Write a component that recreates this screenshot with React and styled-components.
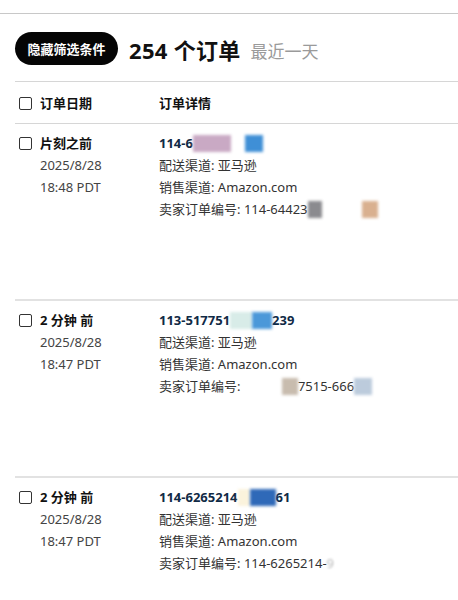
import React from 'react'
import styled, { createGlobalStyle } from 'styled-components'

const GlobalStyle = createGlobalStyle`
  body {
    margin: 0;
    background: #fff;
    font-family: 'Noto Sans', 'Noto Sans CJK SC', sans-serif;
    color: #111;
  }
`

const orders = [
  {
    when: '片刻之前',
    date: '2025/8/28',
    time: '18:48 PDT',
    id: ['114-6', '4423', ''],
    idMask: [{ w: 38, c: '#c9a9c4' }, { gap: 14, w: 18, c: '#3f8fd6' }],
    sellerId: '114-64423',
    sellerMask: [{ w: 14, c: '#8b8b8f' }, { gap: 40, w: 16, c: '#d9b08f' }],
  },
  {
    when: '2 分钟 前',
    date: '2025/8/28',
    time: '18:47 PDT',
    id: ['113-517751', '', '239'],
    idMask: [{ w: 22, c: '#d8ece8' }, { w: 20, c: '#4b98d9' }],
    sellerId: '',
    sellerPre: 38,
    sellerMask: [{ w: 16, c: '#c8bcae' }],
    sellerTail: '7515-666',
    tailMask: { w: 18, c: '#bccbdc' },
  },
  {
    when: '2 分钟 前',
    date: '2025/8/28',
    time: '18:47 PDT',
    id: ['114-6265214', '', '61'],
    idMask: [{ w: 12, c: '#fbf3dc' }, { w: 26, c: '#2f69b8' }],
    sellerId: '114-6265214-',
  },
]

const App = () => {
  return (
    <Page>
      <GlobalStyle />
      <TopRule />
      <Toolbar>
        <PillButton>隐藏筛选条件</PillButton>
        <Count>254 个订单</Count>
        <Range>最近一天</Range>
      </Toolbar>
      <Table>
        <HeadRow>
          <DateCol>
            <Check />
            <HeadLabel>订单日期</HeadLabel>
          </DateCol>
          <HeadLabel>订单详情</HeadLabel>
        </HeadRow>
        {orders.map((o, i) => (
          <OrderRow key={i}>
            <DateCol>
              <Check />
              <DateLines>
                <When>{o.when}</When>
                <Muted>{o.date}</Muted>
                <Muted>{o.time}</Muted>
              </DateLines>
            </DateCol>
            <Details>
              <OrderId>
                {o.id[0]}
                {o.idMask.map((m, j) => (
                  <Mask key={j} $w={m.w} $c={m.c} $gap={m.gap} />
                ))}
                {o.id[2]}
              </OrderId>
              <Line>配送渠道: 亚马逊</Line>
              <Line>销售渠道: Amazon.com</Line>
              <Line>
                卖家订单编号: {o.sellerPre ? <Mask $w={o.sellerPre} $c="#fff" /> : null}
                {o.sellerId}
                {o.sellerMask && o.sellerMask.map((m, j) => (
                  <Mask key={j} $w={m.w} $c={m.c} $gap={m.gap} />
                ))}
                {o.sellerTail}
                {o.tailMask ? <Mask $w={o.tailMask.w} $c={o.tailMask.c} /> : null}
                {i === 2 ? <Faded>9</Faded> : null}
              </Line>
            </Details>
          </OrderRow>
        ))}
      </Table>
    </Page>
  )
}

export default App

// COMPONENTS

const Page = styled.div`
  width: 458px;
  height: 600px;
  overflow: hidden;
`
const TopRule = styled.div`
  margin-top: 13px;
  border-top: 1px solid #c8c8c8;
`
const Toolbar = styled.div`
  display: flex;
  align-items: center;
  padding: 18px 0 0 15px;
  height: 33px;
`
const PillButton = styled.button`
  height: 33px;
  width: 103px;
  border: none;
  border-radius: 17px;
  background: #050505;
  color: #fff;
  font-family: inherit;
  font-size: 13px;
  font-weight: 700;
  padding: 0;
  margin-right: 11px;
`
const Count = styled.span`
  font-size: 22px;
  font-weight: 700;
  color: #111;
  letter-spacing: 0.3px;
  margin-right: 10px;
`
const Range = styled.span`
  font-size: 17px;
  color: #9a9a9a;
  margin-top: 3px;
`
const Table = styled.div`
  margin: 16px 0 0 15px;
  border-top: 1px solid #d6d6d6;
`
const HeadRow = styled.div`
  display: flex;
  height: 41px;
  align-items: center;
  border-bottom: 1px solid #d6d6d6;
`
const DateCol = styled.div`
  width: 144px;
  display: flex;
  align-items: flex-start;
  padding-left: 4px;
  box-sizing: border-box;
`
const Check = styled.span`
  width: 11px;
  height: 11px;
  border: 1px solid #333;
  border-radius: 2px;
  margin: 5px 8px 0 0;
  flex-shrink: 0;
  background: #fff;
`
const HeadLabel = styled.span`
  font-size: 13px;
  font-weight: 600;
  line-height: 22px;
`
const OrderRow = styled.div`
  display: flex;
  height: 167px;
  padding-top: 8px;
  border-bottom: 2px solid #e2e2e2;
`
const DateLines = styled.div`
  display: flex;
  flex-direction: column;
`
const When = styled.span`
  font-size: 13px;
  font-weight: 700;
  line-height: 22px;
`
const Muted = styled.span`
  font-size: 13px;
  line-height: 22px;
  color: #444;
`
const Details = styled.div`
  display: flex;
  flex-direction: column;
`
const OrderId = styled.span`
  font-size: 13px;
  font-weight: 700;
  line-height: 22px;
  color: #102a45;
  display: flex;
  align-items: center;
`
const Line = styled.span`
  font-size: 13px;
  line-height: 22px;
  color: #333;
  display: flex;
  align-items: center;
  white-space: pre;
`
const Mask = styled.span`
  display: inline-block;
  width: ${p => p.$w}px;
  height: 17px;
  margin-left: ${p => p.$gap || 0}px;
  background: ${p => p.$c};
  filter: blur(1.5px);
`
const Faded = styled.span`
  color: #bbb;
  filter: blur(1px);
`
